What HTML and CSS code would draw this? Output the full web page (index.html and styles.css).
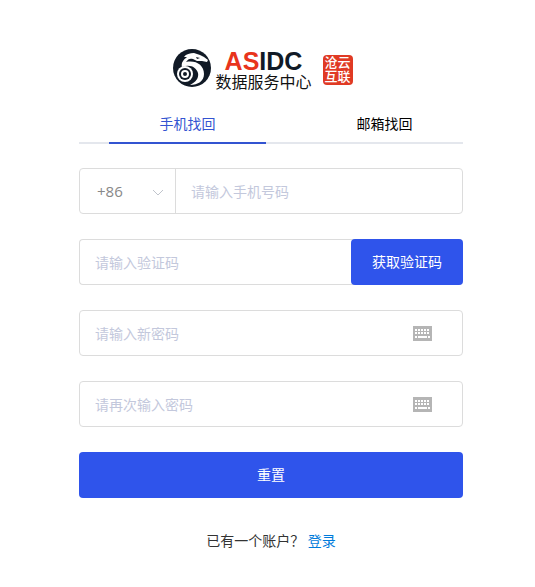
FILE: index.html
```
<!DOCTYPE html>
<html lang="zh-CN">
  <head>
    <meta charset="UTF-8" />
    <meta name="viewport" content="width=device-width, initial-scale=1.0" />
    <title>找回密码</title>
    <link rel="stylesheet" href="styles.css">
  </head>
  <body>
    <main class="reset">
      <header class="logo">
        <svg class="logo-mark" viewBox="0 0 38 38" aria-hidden="true">
          <circle cx="19" cy="19" r="19" fill="#111a26" />
          <!-- 龙头和龙颈 -->
          <path d="M11 8C13 5 17 4 21 4L27 6L31 8L35 11L34 13L29 12L24 12L20 10C17 9 15 10 13 13C23 11 31 16 31 25C31 32 25 36 17 36C23 33 26 29 25 24C23 18 17 15 9 18C8 14 10 11 14 8Z" fill="#fff" />
          <path d="M23 8L27 9L24 10Z" fill="#111a26" />
          <!-- 盘绕的龙尾 -->
          <circle cx="12" cy="25" r="8" fill="#fff" />
          <circle cx="12" cy="25" r="6" fill="#111a26" />
          <circle cx="12" cy="25" r="3" fill="none" stroke="#fff" stroke-width="2" />
        </svg>
        <div class="logo-text">
          <strong class="logo-name"><span>AS</span>IDC</strong>
          <span class="logo-sub">数据服务中心</span>
        </div>
        <div class="seal">沧云<br>互联</div>
      </header>

      <nav class="tabs">
        <button class="tab active" type="button">手机找回</button>
        <button class="tab" type="button">邮箱找回</button>
      </nav>

      <form class="form">
        <div class="field">
          <div class="area">
            <select class="area-select" aria-label="区号">
              <option>+86</option>
            </select>
            <svg class="arrow" viewBox="0 0 12 8" aria-hidden="true">
              <path d="M1 1L6 6L11 1" fill="none" stroke="#c0c4cc" />
            </svg>
          </div>
          <input class="input" type="tel" placeholder="请输入手机号码" aria-label="手机号码">
        </div>
        <div class="field code">
          <input class="input" type="text" placeholder="请输入验证码" aria-label="验证码">
          <button class="btn code-btn" type="button">获取验证码</button>
        </div>
        <div class="field">
          <input class="input" type="password" placeholder="请输入新密码" aria-label="新密码">
          <svg class="keyboard" viewBox="0 0 19 15" aria-hidden="true">
            <path d="M0 0H19V15H0Z" fill="#b5b5b5" />
            <path d="M2 4H17M2 7H17" stroke="#fff" stroke-width="2" stroke-dasharray="2 1" />
            <path d="M2 11H4M5 11H14M15 11H17" stroke="#fff" stroke-width="2" />
          </svg>
        </div>
        <div class="field">
          <input class="input" type="password" placeholder="请再次输入密码" aria-label="确认密码">
          <svg class="keyboard" viewBox="0 0 19 15" aria-hidden="true">
            <path d="M0 0H19V15H0Z" fill="#b5b5b5" />
            <path d="M2 4H17M2 7H17" stroke="#fff" stroke-width="2" stroke-dasharray="2 1" />
            <path d="M2 11H4M5 11H14M15 11H17" stroke="#fff" stroke-width="2" />
          </svg>
        </div>
        <button class="btn" type="submit">重置</button>
      </form>

      <p class="login">已有一个账户？ <a href="#">登录</a></p>
    </main>
  </body>
</html>
```

FILE: styles.css
```
* {
  box-sizing: border-box;
}

body {
  margin: 0;
  background-color: #fff;
  color: #333;
  font-family: "Open Sans", "Noto Sans CJK SC", sans-serif;
  font-size: 14px;
  line-height: 20px;
}

button,
input,
select {
  margin: 0;
  font: inherit;
}

.reset {
  padding: 48px 72px 32px 79px;
}

/* 顶部 logo */
.logo {
  display: flex;
  justify-content: center;
  align-items: center;
  height: 40px;
  padding-right: 16px;
}

.logo-mark {
  width: 38px;
  height: 38px;
}

.logo-text {
  display: flex;
  flex-direction: column;
  align-items: center;
  margin: 0 11px 0 4px;
  white-space: nowrap;
}

.logo-name {
  color: #111a26;
  font-family: "Liberation Sans", sans-serif;
  font-size: 25px;
  line-height: 26px;
}

.logo-name span {
  color: #e8341c;
}

.logo-sub {
  color: #111;
  font-family: "Noto Sans CJK SC", sans-serif;
  font-size: 16px;
  line-height: 14px;
}

.seal {
  width: 30px;
  margin-top: 4px;
  padding: 0 2px 2px;
  border-radius: 4px;
  background-color: #e03a24;
  color: #fff;
  font-family: "Noto Sans CJK SC", sans-serif;
  font-size: 13px;
  font-weight: 500;
  line-height: 14px;
}

/* 切换 */
.tabs {
  display: flex;
  gap: 40px;
  margin-top: 16px;
  padding-left: 30px;
  box-shadow: inset 0 -2px #e4e7ed;
}

.tab {
  flex: 1;
  height: 40px;
  padding: 1px 0 0;
  border: 0;
  border-bottom: 2px solid transparent;
  background: none;
  color: #000;
}

.tab.active {
  border-color: #3354d1;
  color: #3354d1;
}

/* 表单 */
.form {
  display: grid;
  gap: 25px;
  margin-top: 24px;
}

.field {
  display: flex;
  align-items: center;
  height: 46px;
  border: 1px solid #dcdcdc;
  border-radius: 4px;
}

.area {
  position: relative;
  width: 96px;
  height: 100%;
  border-right: 1px solid #dcdcdc;
}

.area-select {
  width: 100%;
  height: 100%;
  padding: 0 17px;
  border: 0;
  background: none;
  color: #888;
  font-size: 15px;
  appearance: none;
}

.arrow {
  position: absolute;
  top: 20px;
  right: 11px;
  width: 12px;
  height: 8px;
  pointer-events: none;
}

.input {
  flex: 1;
  min-width: 0;
  height: 100%;
  padding: 0 15px;
  border: 0;
  background: none;
  outline: none;
}

.input::placeholder {
  color: #c3c8dc;
}

.keyboard {
  width: 19px;
  height: 15px;
  margin-right: 30px;
}

.btn {
  height: 46px;
  border: 0;
  border-radius: 4px;
  background-color: #2f54eb;
  color: #fff;
}

.code {
  border-right: 0;
}

.code-btn {
  width: 112px;
}

.login {
  margin: 33px 0 0;
  text-align: center;
}

.login a {
  color: #007bdb;
  text-decoration: none;
}
```
